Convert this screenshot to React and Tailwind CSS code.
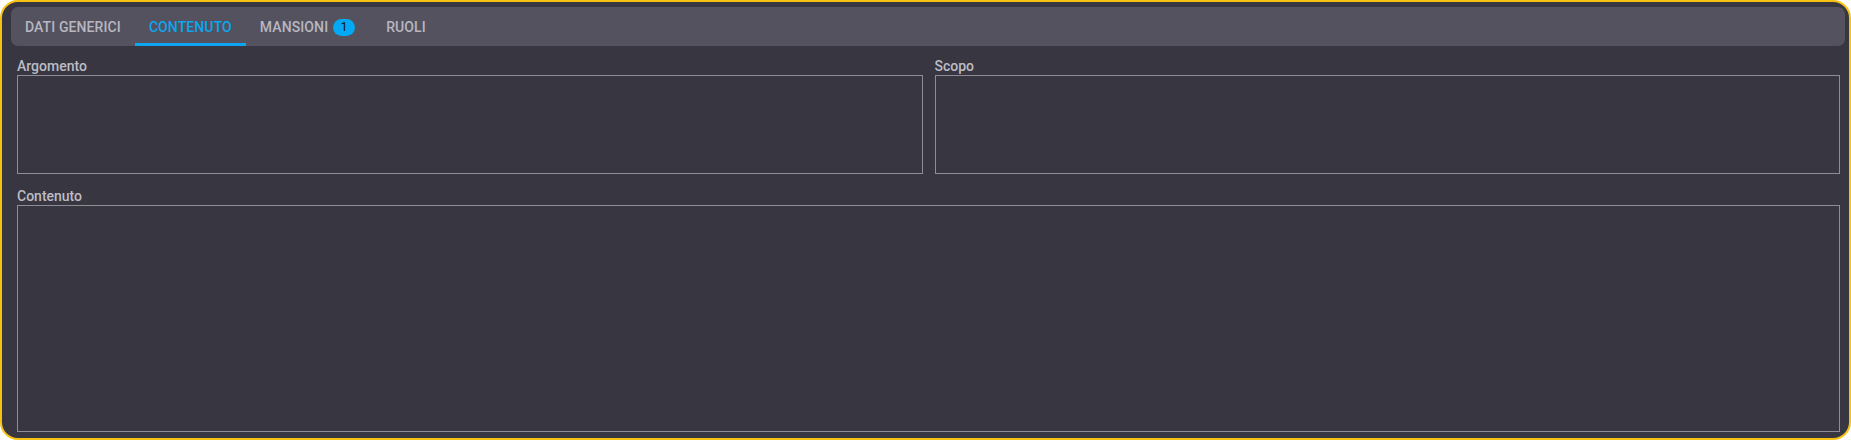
// Scheda documento: barra dei tab in alto e campi di testo del contenuto
const tabs = [
  { id: "generici", label: "DATI GENERICI" },
  { id: "contenuto", label: "CONTENUTO" },
  { id: "mansioni", label: "MANSIONI", badge: 1 },
  { id: "ruoli", label: "RUOLI" },
];

function Tab({ tab, active }) {
  return (
    <button
      className={
        "relative flex h-full items-center px-[14px] text-[14px] font-medium tracking-[0.1px] " +
        (active ? "text-[#0ea5f0]" : "text-[#b8b7c0]")
      }
    >
      {tab.label}
      {tab.badge != null && (
        <span className="ml-[5px] mr-[3px] flex h-[17px] w-[22px] items-center justify-center rounded-full bg-[#03a9f4] text-[12px] font-normal text-[#111]">
          {tab.badge}
        </span>
      )}
      {active && <span className="absolute bottom-0 left-0 right-0 h-[3px] bg-[#0ea5f0]" />}
    </button>
  );
}

function Field({ label, className = "" }) {
  return (
    <div className={"flex flex-col " + className}>
      <label className="h-[18px] text-[14px] font-medium leading-[18px] text-[#bdbcc4]">{label}</label>
      <textarea className="min-h-0 flex-1 resize-none border border-[#8e8d96] bg-transparent outline-none" />
    </div>
  );
}

export default function App() {
  return (
    <div className="flex h-[440px] w-full flex-col rounded-[18px] border-2 border-[#f5c211] bg-[#373641] pb-[6px] pl-[9px] pr-[4px] pt-[5px] font-['Roboto',sans-serif]">
      <div className="flex h-[39px] shrink-0 items-stretch rounded-[7px] bg-[#54525f] pt-[1px]">
        {tabs.map((t) => (
          <Tab key={t.id} tab={t} active={t.id === "contenuto"} />
        ))}
      </div>

      <div className="flex flex-1 flex-col pl-[6px] pr-[5px] pt-[11px]">
        <div className="grid h-[117px] shrink-0 grid-cols-2 gap-[12px]">
          <Field label="Argomento" />
          <Field label="Scopo" />
        </div>
        <Field label="Contenuto" className="mt-[13px] flex-1" />
      </div>
    </div>
  );
}
